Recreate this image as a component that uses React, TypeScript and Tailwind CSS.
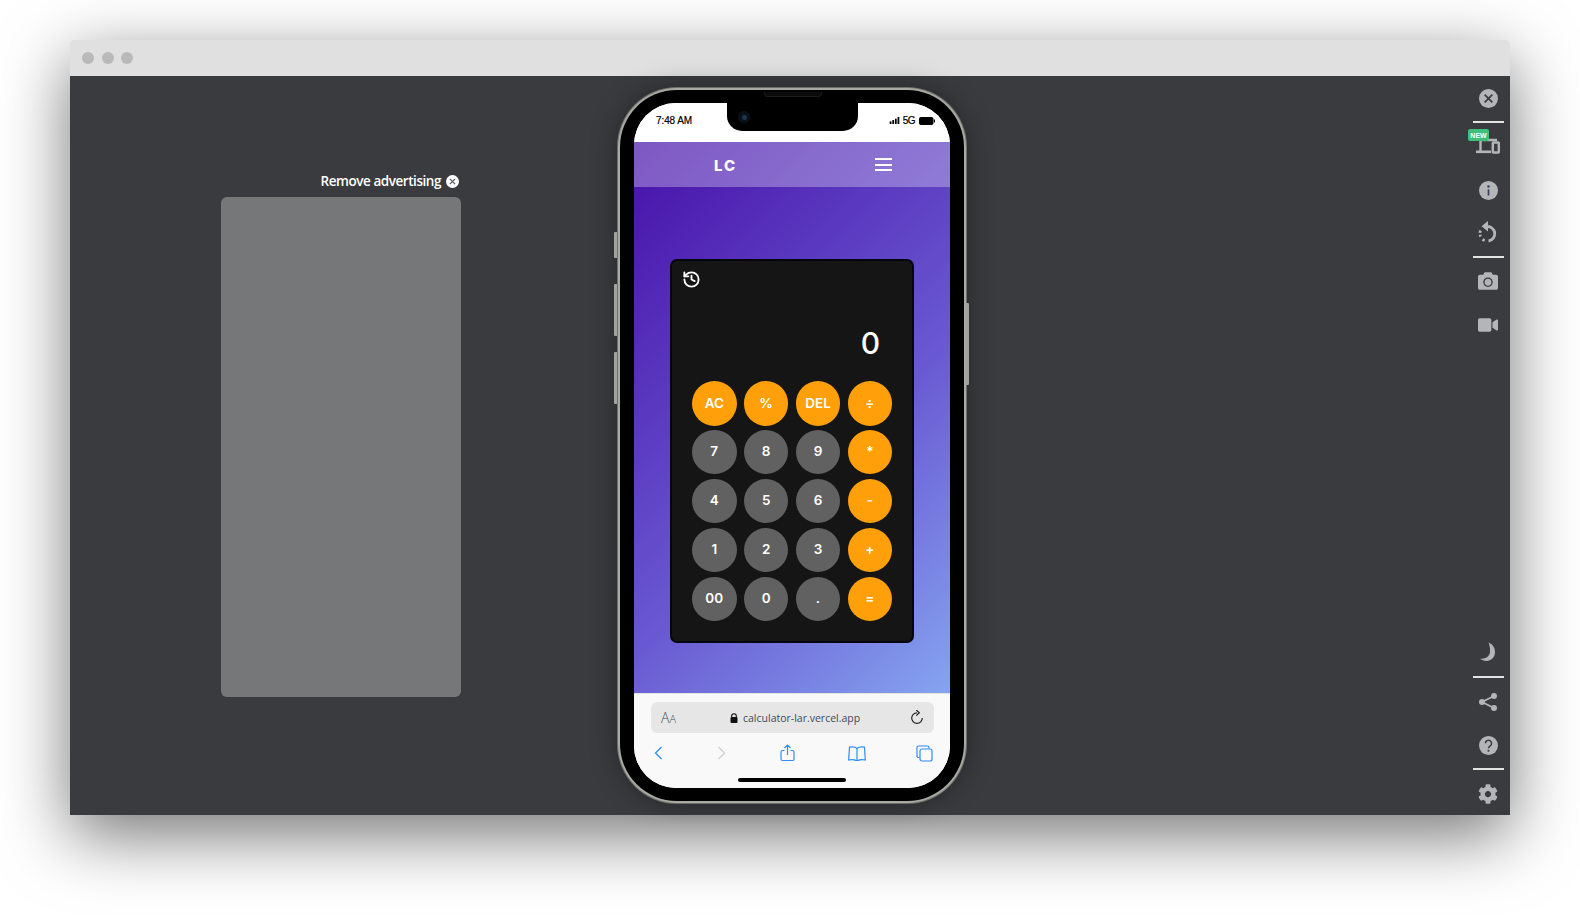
import React from "react";
import { FaCamera, FaVideo, FaCog } from "react-icons/fa";
import { History } from "lucide-react";

const ICON = "#b4b5b7";
const BLUE = "#2f8cf8";
const poppins = "[font-family:Inter,'Liberation_Sans',sans-serif]";

function Sep({ className }: { className: string }) {
  return <div className={`h-[2px] w-[31px] bg-[#e3e3e3] ${className}`} />;
}

function Slot({ className, children }: { className: string; children: React.ReactNode }) {
  return <div className={`relative flex h-5 w-5 items-center justify-center ${className}`}>{children}</div>;
}

function CloseDisc({ size, fill, x }: { size: number; fill: string; x: string }) {
  return (
    <svg width={size} height={size} viewBox="0 0 20 20">
      <circle cx="10" cy="10" r="10" fill={fill} />
      <path d="M6 6l8 8M14 6l-8 8" stroke={x} strokeWidth="1.800" fill="none" />
    </svg>
  );
}

function Sidebar() {
  return (
    <div className="ml-auto flex h-full w-[44px] flex-col items-center justify-between">
      <div className="flex flex-col items-center">
        <Slot className="mt-[12px]"><CloseDisc size={19} fill={ICON} x="#3a3b3f" /></Slot>
        <Sep className="mt-[13px]" />
        <Slot className="mt-[14px]">
          <svg width="26" height="20" viewBox="0 0 26 20" className="absolute left-[-3px] top-[-1px]">
            <path d="M5.500 15V4H22" fill="none" stroke={ICON} strokeWidth="2.400" />
            <path d="M1 15.800h15" stroke={ICON} strokeWidth="2.600" />
            <rect x="17.800" y="6.500" width="6" height="10" rx="0.500" fill="none" stroke={ICON} strokeWidth="2.400" />
          </svg>
          <span className="absolute left-[-10px] top-[-8px] flex h-[12px] w-[21px] items-center justify-center rounded-[2px] bg-[#3fc07a] text-[7px] font-bold leading-none text-white [font-family:'Liberation_Sans',sans-serif]">NEW</span>
        </Slot>
        <Slot className="mt-[23px]">
          <svg width="19" height="19" viewBox="0 0 20 20">
            <circle cx="10" cy="10" r="10" fill={ICON} />
            <circle cx="10" cy="5.800" r="1.300" fill="#3a3f5c" />
            <path d="M10 8.800v6.500" stroke="#3a3f5c" strokeWidth="1.800" />
          </svg>
        </Slot>
        <Slot className="mt-[22px]">
          <svg width="20" height="22" viewBox="0 0 20 22">
            <path d="M8.500 5.600A7.200 7.200 0 1 1 10.500 20" fill="none" stroke={ICON} strokeWidth="2.800" />
            <path d="M2.500 9.500a7.200 7.200 0 0 0 .2 6M4.600 18.300a7 7 0 0 0 3.400 1.500" fill="none" stroke={ICON} strokeWidth="2.800" strokeDasharray="2.400 1.800" />
            <path d="M3.500 5.300 10 0v10.500z" fill={ICON} />
          </svg>
        </Slot>
        <Sep className="mt-[14px]" />
        <Slot className="mt-[13px]"><FaCamera size={20} color={ICON} /></Slot>
        <Slot className="mt-[24px]"><FaVideo size={20} color={ICON} /></Slot>
      </div>
      <div className="flex flex-col items-center pb-[11px]">
        <Slot className="">
          <svg width="20" height="20" viewBox="0 0 20 20" className="ml-[-2px]">
            <path d="M11.500 0.500C15.500 2 18 5.500 18 10c0 5.500-4 9-8.500 9-2.500 0-5-1-6.500-2.500 4.500 1 9.500-1.500 10-6.500.3-3.500-.5-7-1.500-9.500z" fill={ICON} />
          </svg>
        </Slot>
        <Sep className="mt-[14px]" />
        <Slot className="mt-[14px]">
          <svg width="20" height="20" viewBox="0 0 20 20">
            <path d="M16 4 4 10l12 6" fill="none" stroke={ICON} strokeWidth="1.800" />
            <circle cx="16" cy="4" r="3" fill={ICON} />
            <circle cx="4" cy="10" r="3" fill={ICON} />
            <circle cx="16" cy="16" r="3" fill={ICON} />
          </svg>
        </Slot>
        <Slot className="mt-[23px]">
          <svg width="19" height="19" viewBox="0 0 20 20">
            <circle cx="10" cy="10" r="10" fill={ICON} />
            <path d="M6.800 7.600a3.200 3.200 0 1 1 5 2.700c-1.200.8-1.800 1.300-1.800 2.700" fill="none" stroke="#3a3b3f" strokeWidth="1.600" />
            <circle cx="10" cy="15.500" r="1.100" fill="#3a3b3f" />
          </svg>
        </Slot>
        <Sep className="mt-[13px]" />
        <Slot className="mt-[14px]"><FaCog size={20} color={ICON} /></Slot>
      </div>
    </div>
  );
}

function AdColumn() {
  return (
    <div className="ml-[151px] flex w-[240px] shrink-0 flex-col pt-[96px]">
      <div className="flex h-[18px] items-center justify-end gap-[5px] pr-[2px] text-[13.500px] font-semibold leading-none tracking-[-0.45px] text-white [font-family:'Open_Sans',sans-serif]">
        <span className="pt-[2px]">Remove advertising</span>
        <CloseDisc size={13} fill="#ffffff" x="#55565a" />
      </div>
      <div className="mt-[7px] h-[500px] rounded-[6px] bg-[#767779]" />
    </div>
  );
}

function StatusBar() {
  return (
    <div className="relative flex h-[39px] shrink-0 items-start justify-between bg-white pl-[22px] pr-[15px] pt-[10px] [font-family:'Liberation_Sans',sans-serif]">
      <span className="text-[10px] font-medium leading-[15px] tracking-[-0.1px] text-black [-webkit-text-stroke:0.2px_black]">7:48 AM</span>
      <div className="flex h-[15px] items-center gap-[3px]">
        <svg width="11" height="7" viewBox="0 0 11 8">
          <rect x="0" y="5" width="2" height="3" fill="#000" />
          <rect x="3" y="3.500" width="2" height="4.500" fill="#000" />
          <rect x="6" y="2" width="2" height="6" fill="#000" />
          <rect x="9" y="0" width="2" height="8" fill="#000" />
        </svg>
        <span className="text-[10px] font-medium leading-none tracking-[-0.5px] text-black [-webkit-text-stroke:0.2px_black]">5G</span>
        <svg width="16" height="8" viewBox="0 0 16 8" className="ml-px">
          <rect x="0" y="0" width="14.500" height="8" rx="2" fill="#000" />
          <rect x="15" y="2.500" width="1" height="3" fill="#000" />
        </svg>
      </div>
      <div className="absolute left-[93px] top-0 flex h-[28px] w-[131px] items-center rounded-b-[15px] bg-black pl-[11px]">
        <div className="flex h-[12px] w-[12px] items-center justify-center rounded-full bg-[#0b1016]">
          <div className="h-[5px] w-[5px] rounded-full bg-[#1d3550]" />
        </div>
      </div>
    </div>
  );
}

function Nav() {
  return (
    <div className="flex h-[45px] shrink-0 items-center justify-between bg-white/30 pl-[80px] pr-[58px]">
      <span className={`pt-[1px] text-[15px] font-extrabold leading-none tracking-[2px] text-white ${poppins}`}>LC</span>
      <div className="flex w-[17px] flex-col gap-[3.500px]">
        <div className="h-[2px] bg-white" />
        <div className="h-[2px] bg-white" />
        <div className="h-[2px] bg-white" />
      </div>
    </div>
  );
}

const keys = ["AC", "%", "DEL", "÷", "7", "8", "9", "*", "4", "5", "6", "-", "1", "2", "3", "+", "00", "0", ".", "="];

function Calculator() {
  return (
    <div className="ml-[36px] mt-[72px] flex h-[384px] w-[244px] flex-col rounded-[7px] border-2 border-[#05050f] bg-[#151515]">
      <div className="pl-[10px] pt-[9px]"><History size={19} color="#ffffff" strokeWidth={2.3} /></div>
      <div className={`mt-[34px] flex h-[40px] items-center justify-end pr-[32px] text-[30px] font-medium leading-none text-white ${poppins}`}>0</div>
      <div className="ml-[20px] mt-[18px] grid w-[200px] grid-cols-4 gap-x-[7.500px] gap-y-[4.400px]">
        {keys.map((k, i) => {
          const orange = i < 3 || i % 4 === 3;
          return (
            <div
              key={k}
              className={`flex h-[44.500px] w-[44.500px] items-center justify-center rounded-full text-[13.500px] font-semibold leading-none text-white ${poppins} ${orange ? "bg-[#ff9f0a]" : "bg-[#616161]"}`}
            >
              {k}
            </div>
          );
        })}
      </div>
    </div>
  );
}

function BrowserBar() {
  return (
    <div className="flex h-[95px] shrink-0 flex-col border-t border-[#e4e4e0] bg-[#f9f9f9] [font-family:'Open_Sans',sans-serif]">
      <div className="ml-[17px] mr-[16px] mt-[8px] flex h-[31px] items-center rounded-[6px] bg-[#e6e6e6] pl-[10px] pr-[10px]">
        <span className="w-[60px] text-[14px] font-light leading-none text-[#3c4658]">A<span className="text-[11px]">A</span></span>
        <div className="flex items-center gap-[5px] pl-[9px] pt-[1px]">
          <svg width="8" height="10" viewBox="0 0 8 10">
            <path d="M1.700 4.500V3a2.300 2.300 0 0 1 4.600 0v1.500" fill="none" stroke="#111" strokeWidth="1.100" />
            <rect x="0.500" y="4" width="7" height="6" rx="1" fill="#111" />
          </svg>
          <span className="text-[10.500px] leading-none text-[#3f4a5c]">calculator-lar.vercel.app</span>
        </div>
        <svg width="14" height="15" viewBox="0 0 14 15" className="ml-auto">
          <path d="M7 2.800a5.300 5.300 0 1 0 5.300 5.300" fill="none" stroke="#222" strokeWidth="1.200" />
          <path d="M6.300 0 9.300 2.800 6.300 5.600" fill="none" stroke="#222" strokeWidth="1.200" />
        </svg>
      </div>
      <div className="mt-[10px] flex h-[20px] items-center pl-[20px]">
        <svg width="9" height="14" viewBox="0 0 9 14"><path d="M7.500 1 1.500 7l6 6" fill="none" stroke={BLUE} strokeWidth="1.300" /></svg>
        <svg width="9" height="14" viewBox="0 0 9 14" className="ml-[54px]"><path d="M1.500 1l6 6-6 6" fill="none" stroke="#cfcfcf" strokeWidth="1.300" /></svg>
        <svg width="15" height="18" viewBox="0 0 15 18" className="ml-[54px]">
          <path d="M4.500 6.500H2.500a1.500 1.500 0 0 0-1.500 1.500v7a1.500 1.500 0 0 0 1.500 1.500h10a1.500 1.500 0 0 0 1.500-1.500V8a1.500 1.500 0 0 0-1.500-1.500h-2M7.500 11V1M4.500 4l3-3 3 3" fill="none" stroke={BLUE} strokeWidth="1.200" />
        </svg>
        <svg width="18" height="15" viewBox="0 0 18 15" className="ml-[53px]">
          <path d="M9 2.500C7.500 1 4.500.7 1.500 1.200L.7 14c3-.6 6-.4 8.300 1 2.300-1.400 5.300-1.600 8.300-1l-.8-12.800C13.500.7 10.500 1 9 2.500zM9 2.500V15" fill="none" stroke={BLUE} strokeWidth="1.200" />
        </svg>
        <svg width="17" height="17" viewBox="0 0 17 17" className="ml-[50px]">
          <path d="M3.500 12.500H2.500a1.500 1.500 0 0 1-1.500-1.500V2.500A1.500 1.500 0 0 1 2.500 1h9A1.500 1.500 0 0 1 13 2.500v1" fill="none" stroke={BLUE} strokeWidth="1.200" />
          <rect x="4" y="4" width="12" height="12" rx="2" fill="none" stroke={BLUE} strokeWidth="1.200" />
        </svg>
      </div>
      <div className="mx-auto mt-[15px] h-[4px] w-[108px] rounded-full bg-black" />
    </div>
  );
}

function Phone() {
  return (
    <div className="relative ml-[156px] mt-[11px] h-[717px] w-[350px] shrink-0 rounded-[60px] bg-[#6f6f69] p-px shadow-[0_0_26px_rgba(0,0,0,0.35)]">
      <div className="absolute left-[-3px] top-[145px] h-[26px] w-[3px] rounded-l-[1px] bg-[#a2a29c]" />
      <div className="absolute left-[-3px] top-[197px] h-[52px] w-[3px] rounded-l-[1px] bg-[#a2a29c]" />
      <div className="absolute left-[-3px] top-[265px] h-[52px] w-[3px] rounded-l-[1px] bg-[#a2a29c]" />
      <div className="absolute right-[-2px] top-[216px] h-[82px] w-[3px] rounded-r-[1px] bg-[#a2a29c]" />
      <div className="h-full rounded-[59px] bg-[#a9a9a3] p-[2px]">
        <div className="relative h-full rounded-[57px] bg-black pb-[13px] pl-[14px] pr-[14px] pt-[13px]">
          <div className="absolute left-[144px] top-[2px] h-[5px] w-[58px] rounded-b-[4px] border border-t-0 border-[#1c1c1c] bg-[#0a0a0a]" />
          <div className="flex h-full flex-col overflow-hidden rounded-[42px] bg-white">
            <StatusBar />
            <div className="flex min-h-0 flex-1 flex-col bg-[linear-gradient(135deg,#4710a9_0%,#6a5ad2_60%,#85a4f0_100%)]">
              <Nav />
              <Calculator />
            </div>
            <BrowserBar />
          </div>
        </div>
      </div>
    </div>
  );
}

export default function App() {
  return (
    <div className="h-[915px] w-[1580px] overflow-hidden bg-white pl-[70px] pt-[40px]">
      <div className="flex h-[775px] w-[1440px] flex-col rounded-t-[4px] shadow-[0_20px_68px_rgba(0,0,0,0.55)]">
        <div className="flex h-[36px] shrink-0 items-center gap-[7.500px] rounded-t-[4px] bg-[#e0e0e0] pb-[1px] pl-[12px]">
          <div className="h-[12px] w-[12px] rounded-full bg-[#b9b9b9]" />
          <div className="h-[12px] w-[12px] rounded-full bg-[#b9b9b9]" />
          <div className="h-[12px] w-[12px] rounded-full bg-[#b9b9b9]" />
        </div>
        <div className="flex min-h-0 flex-1 bg-[#3a3b3f]">
          <AdColumn />
          <Phone />
          <Sidebar />
        </div>
      </div>
    </div>
  );
}
